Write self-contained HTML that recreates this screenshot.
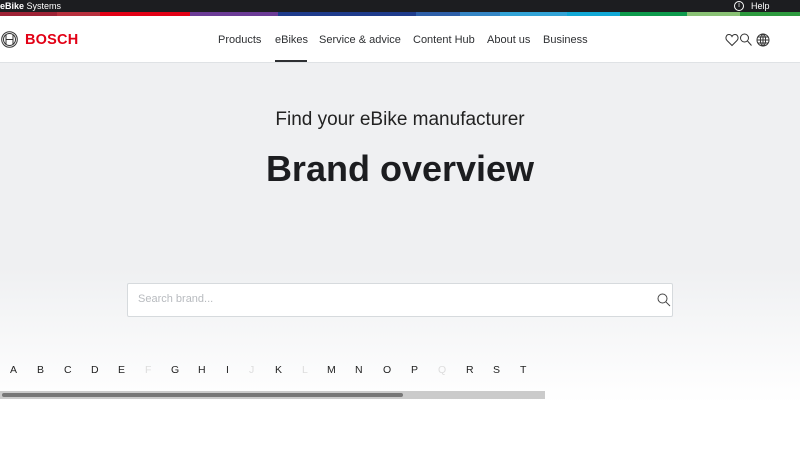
<!DOCTYPE html>
<html><head><meta charset="utf-8"><style>
*{margin:0;padding:0;box-sizing:border-box}
body{width:800px;height:450px;overflow:hidden;font-family:"Liberation Sans",sans-serif;background:#fff;position:relative}
.top{position:absolute;left:0;top:0;width:800px;height:12px;background:#1c1d20;color:#fff;font-size:9px;line-height:12px}
.strip{position:absolute;top:12px;height:4px}
.nav{position:absolute;top:16px;left:0;width:800px;height:47px;background:#fff;border-bottom:1px solid #dfe2e5}
.nav a{position:absolute;top:18px;font-size:11px;color:#2e3033;text-decoration:none}
.hero{position:absolute;top:63px;left:0;width:800px;height:340px;background:linear-gradient(#eff0f2 0,#eff0f2 205px,#fff 340px)}
.l{position:absolute;top:364px;font-size:10.5px;color:#222}
.l.d{color:#ddd}
</style></head><body>
<div class="top"><span style="position:absolute;left:0"><b>eBike</b> Systems</span>
<span style="position:absolute;left:734px;top:1px;width:10px;height:10px;border:1px solid #fff;border-radius:50%;font-size:7px;line-height:8px;text-align:center">i</span>
<span style="position:absolute;left:751px">Help</span></div>
<div class="strip" style="left:0;width:57px;background:#9e2235"></div>
<div class="strip" style="left:57px;width:43px;background:#b8303d"></div>
<div class="strip" style="left:100px;width:90px;background:#e20015"></div>
<div class="strip" style="left:190px;width:88px;background:#6b3b96"></div>
<div class="strip" style="left:278px;width:138px;background:#1f3c8c"></div>
<div class="strip" style="left:416px;width:44px;background:#2e5fa8"></div>
<div class="strip" style="left:460px;width:40px;background:#3485c4"></div>
<div class="strip" style="left:500px;width:67px;background:#32a3d6"></div>
<div class="strip" style="left:567px;width:53px;background:#11a8d5"></div>
<div class="strip" style="left:620px;width:67px;background:#0d9a4c"></div>
<div class="strip" style="left:687px;width:53px;background:#89c174"></div>
<div class="strip" style="left:740px;width:60px;background:#2d9a3e"></div>
<div class="nav">
<svg style="position:absolute;left:1px;top:15px" width="17" height="17" viewBox="0 0 17 17" fill="none" stroke="#333" stroke-width="1"><circle cx="8.5" cy="8.5" r="7.8"/><circle cx="8.5" cy="8.5" r="6"/><path d="M5 3.5v10M12 3.5v10M5 8.5h7"/></svg>
<span style="position:absolute;left:25px;top:16px;font-size:14.5px;font-weight:bold;color:#e20015;letter-spacing:0.2px">BOSCH</span>
<a style="left:218px">Products</a>
<a style="left:275px">eBikes</a>
<div style="position:absolute;left:275px;top:44px;width:32px;height:2px;background:#2e3033"></div>
<a style="left:319px">Service &amp; advice</a>
<a style="left:413px">Content Hub</a>
<a style="left:487px">About us</a>
<a style="left:543px">Business</a>
<svg style="position:absolute;left:725px;top:17px" width="46" height="14" viewBox="0 0 46 14" fill="none" stroke="#333" stroke-width="1"><path d="M7 12.5L2 7.5C0 5.5 1 1.5 4 1.5C5.5 1.5 6.5 2.5 7 3.5C7.5 2.5 8.5 1.5 10 1.5C13 1.5 14 5.5 12 7.5Z"/><circle cx="19.5" cy="5" r="4"/><path d="M22.5 8l4 4.5"/><circle cx="38" cy="7" r="6"/><ellipse cx="38" cy="7" rx="2.6" ry="6"/><path d="M32 7h12M38 1v12M33 4h10M33 10h10"/></svg>
</div>
<div class="hero"></div>
<div style="position:absolute;top:109px;left:0;width:800px;text-align:center;font-size:19px;color:#222">Find your eBike manufacturer</div>
<div style="position:absolute;top:148px;left:0;width:800px;text-align:center;font-size:36px;font-weight:bold;color:#1c1d20">Brand overview</div>
<div style="position:absolute;left:127px;top:283px;width:546px;height:34px;background:#fff;border:1px solid #d6dadd;border-radius:2px">
<span style="position:absolute;left:10px;top:9px;font-size:11px;color:#b8bbbf">Search brand...</span>
<svg style="position:absolute;left:529px;top:9px" width="14" height="14" viewBox="0 0 14 14" fill="none" stroke="#444" stroke-width="1"><circle cx="5.5" cy="5.5" r="4.5"/><path d="M8.8 8.8l4.2 4.2"/></svg>
</div>
<span class="l" style="left:10px">A</span><span class="l" style="left:37px">B</span><span class="l" style="left:64px">C</span><span class="l" style="left:91px">D</span><span class="l" style="left:118px">E</span><span class="l d" style="left:145px">F</span><span class="l" style="left:171px">G</span><span class="l" style="left:198px">H</span><span class="l" style="left:226px">I</span><span class="l d" style="left:249px">J</span><span class="l" style="left:275px">K</span><span class="l d" style="left:302px">L</span><span class="l" style="left:327px">M</span><span class="l" style="left:355px">N</span><span class="l" style="left:383px">O</span><span class="l" style="left:411px">P</span><span class="l d" style="left:438px">Q</span><span class="l" style="left:466px">R</span><span class="l" style="left:493px">S</span><span class="l" style="left:520px">T</span>
<div style="position:absolute;left:0;top:391px;width:545px;height:8px;background:#cbcbcb"></div>
<div style="position:absolute;left:2px;top:393px;width:401px;height:4px;background:#777;border-radius:2px"></div>
</body></html>
